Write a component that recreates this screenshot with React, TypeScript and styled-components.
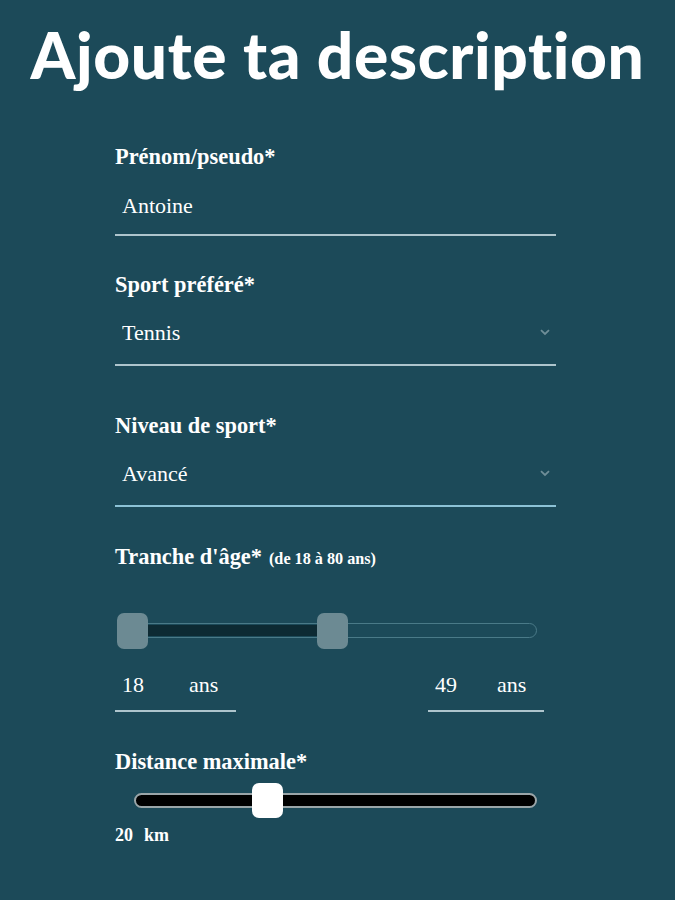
import React from "react";
import styled, { createGlobalStyle } from "styled-components";

const GlobalStyle = createGlobalStyle`
  html, body {
    margin: 0;
    padding: 0;
    background: #1c4a59;
  }
  * { box-sizing: border-box; }
`;

const Page = styled.div`
  width: 675px;
  min-height: 900px;
  background: #1c4a59;
  padding-top: 23px;
  display: flex;
  flex-direction: column;
`;

const Title = styled.h1`
  margin: 0;
  align-self: center;
  font-family: "Lato", "Open Sans", sans-serif;
  font-weight: 900;
  font-size: 64px;
  line-height: 64px;
  color: #ffffff;
  letter-spacing: 0.6px;
  white-space: nowrap;
`;

const Form = styled.form`
  width: 441px;
  margin: 57px 0 0 115px;
  display: flex;
  flex-direction: column;
  font-family: "Liberation Serif", "Times New Roman", serif;
  color: #ffffff;
`;

const Field = styled.div<{ $after: number }>`
  display: flex;
  flex-direction: column;
  margin-bottom: ${(p) => p.$after}px;
`;

const Label = styled.label`
  font-weight: 700;
  font-size: 22.4px;
  line-height: 26px;
  color: #ffffff;
  display: flex;
  align-items: baseline;
  gap: 7px;
`;

const Hint = styled.span`
  font-size: 16.2px;
  font-weight: 700;
`;

const TextInput = styled.input`
  margin-top: 12px;
  width: 100%;
  font-family: "Liberation Serif", "Times New Roman", serif;
  font-size: 22px;
  line-height: 26px;
  height: 54px;
  padding: 11px 7px 15px;
  color: #ffffff;
  background: transparent;
  border: none;
  border-bottom: 2px solid #aec5cd;
  outline: none;
`;

const SelectWrap = styled.div`
  margin-top: 12px;
  position: relative;
  width: 100%;
`;

const Select = styled.select<{ $line: string }>`
  appearance: none;
  -webkit-appearance: none;
  width: 100%;
  font-family: "Liberation Serif", "Times New Roman", serif;
  font-size: 22px;
  line-height: 26px;
  height: 56px;
  padding: 10px 7px 18px;
  color: #ffffff;
  background: transparent;
  border: none;
  border-radius: 0;
  border-bottom: 2px solid ${(p) => p.$line};
  outline: none;
`;

const Chevron = styled.svg`
  position: absolute;
  right: 6px;
  top: 19px;
  width: 10px;
  height: 7px;
  pointer-events: none;
`;

const RangeBox = styled.div<{ $left: number; $width: number; $top: number }>`
  position: relative;
  margin: ${(p) => p.$top}px 0 0 ${(p) => p.$left}px;
  width: ${(p) => p.$width}px;
  height: 36px;
`;

const Track = styled.div<{ $border: string; $fill: string; $bw: number }>`
  position: absolute;
  left: 0;
  right: 0;
  top: 10px;
  height: 15px;
  border-radius: 8px;
  border: ${(p) => p.$bw}px solid ${(p) => p.$border};
  background: ${(p) => p.$fill};
`;

const Filled = styled.div`
  position: absolute;
  top: 12px;
  height: 11px;
  background: #0d2a33;
`;

const Thumb = styled.div<{ $color: string; $h: number }>`
  position: absolute;
  top: 0;
  width: 31px;
  height: ${(p) => p.$h}px;
  border-radius: 7px;
  background: ${(p) => p.$color};
`;

const AgeRow = styled.div`
  margin-top: 16px;
  display: flex;
  justify-content: space-between;
  align-items: flex-end;
  padding-right: 12px;
`;

const AgeGroup = styled.div<{ $w: number; $gap: number }>`
  width: ${(p) => p.$w}px;
  display: flex;
  align-items: baseline;
  gap: ${(p) => p.$gap}px;
  padding: 7px 7px 12px;
  border-bottom: 2px solid #aec5cd;
  font-size: 22px;
  line-height: 26px;
  color: #ffffff;
`;

const AgeValue = styled.span`
  display: inline-block;
`;

const DistanceValue = styled.div`
  margin-top: 5px;
  font-size: 18px;
  line-height: 22px;
  font-weight: 700;
  display: flex;
  gap: 11px;
`;

const AGE_MIN = 18;
const AGE_MAX = 80;
const AGE_TRAVEL = 400;

function ChevronIcon() {
  return (
    <Chevron viewBox="0 0 10 7">
      <path d="M1 1.2 L5 5 L9 1.2" fill="none" stroke="#6f8e98" strokeWidth="1.8" />
    </Chevron>
  );
}

export default function App() {
  const low = 18;
  const high = 49;
  const km = 20;
  const lowX = ((low - AGE_MIN) / (AGE_MAX - AGE_MIN)) * AGE_TRAVEL;
  const highX = ((high - AGE_MIN) / (AGE_MAX - AGE_MIN)) * AGE_TRAVEL;
  const kmX = ((km - 1) / 60) * (403 - 31);

  return (
    <>
      <GlobalStyle />
      <Page>
        <Title>Ajoute ta description</Title>
        <Form>
          <Field $after={36}>
            <Label>Prénom/pseudo*</Label>
            <TextInput defaultValue="Antoine" />
          </Field>
          <Field $after={47}>
            <Label>Sport préféré*</Label>
            <SelectWrap>
              <Select $line="#aec5cd" defaultValue="Tennis">
                <option>Tennis</option>
                <option>Football</option>
                <option>Basketball</option>
              </Select>
              <ChevronIcon />
            </SelectWrap>
          </Field>
          <Field $after={37}>
            <Label>Niveau de sport*</Label>
            <SelectWrap>
              <Select $line="#8cc2d6" defaultValue="Avancé">
                <option>Débutant</option>
                <option>Intermédiaire</option>
                <option>Avancé</option>
              </Select>
              <ChevronIcon />
            </SelectWrap>
          </Field>
          <Field $after={37}>
            <Label>
              Tranche d'âge* <Hint>(de 18 à 80 ans)</Hint>
            </Label>
            <RangeBox $left={2} $width={420} $top={41}>
              <Track $border="#4a7a88" $fill="transparent" $bw={1.5} />
              <Filled style={{ left: lowX + 15, width: highX - lowX }} />
              <Thumb $color="#6c8a93" $h={36} style={{ left: lowX }} />
              <Thumb $color="#6c8a93" $h={36} style={{ left: highX }} />
            </RangeBox>
            <AgeRow>
              <AgeGroup $w={121} $gap={45}>
                <AgeValue>18</AgeValue>
                <span>ans</span>
              </AgeGroup>
              <AgeGroup $w={116} $gap={40}>
                <AgeValue>49</AgeValue>
                <span>ans</span>
              </AgeGroup>
            </AgeRow>
          </Field>
          <Field $after={0}>
            <Label>Distance maximale*</Label>
            <RangeBox $left={19} $width={403} $top={8}>
              <Track $border="#9aa5a8" $fill="#000000" $bw={2} />
              <Thumb $color="#ffffff" $h={35} style={{ left: kmX }} />
            </RangeBox>
            <DistanceValue>
              <span>{km}</span>
              <span>km</span>
            </DistanceValue>
          </Field>
        </Form>
      </Page>
    </>
  );
}
